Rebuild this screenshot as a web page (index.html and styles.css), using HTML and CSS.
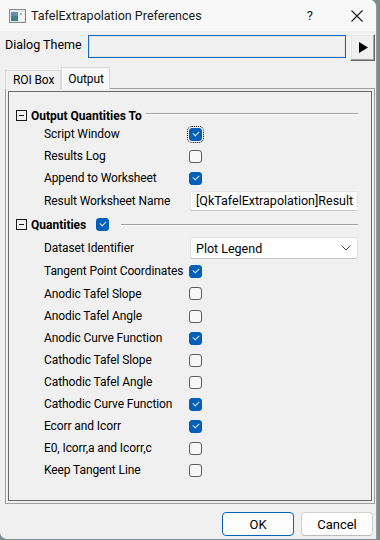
FILE: index.html
```html
<!DOCTYPE html>
<html>
<head>
<meta charset="utf-8">
<link rel="stylesheet" href="styles.css">
</head>
<body>
<div class="window">
  <div class="titlebar">
    <svg class="appicon" width="17" height="14" viewBox="0 0 17 14">
      <rect x="0.5" y="0.5" width="16" height="13" fill="#e8e8e8" stroke="#8a8a8a"/>
      <rect x="2" y="3" width="7" height="9" fill="#3f7f86"/>
      <rect x="2" y="3" width="7" height="4" fill="#5f8fb0"/>
      <rect x="10" y="3" width="5" height="9" fill="#f4f4f4"/>
      <rect x="11" y="4" width="2" height="2" fill="#8fc08f"/>
    </svg>
    <span class="title">TafelExtrapolation Preferences</span>
    <span class="help">?</span>
    <svg class="close" width="12" height="12" viewBox="0 0 12 12"><path d="M0.5 0.5 L11.5 11.5 M11.5 0.5 L0.5 11.5" stroke="#1a1a1a" stroke-width="1.1"/></svg>
  </div>
  <div class="content">
    <div class="theme-row">
      <span class="theme-label">Dialog Theme</span>
      <div class="theme-input"></div>
      <div class="theme-btn"><svg width="11" height="11" viewBox="0 0 11 11"><path d="M1 0 L10 5.5 L1 11 Z" fill="#000"/></svg></div>
    </div>
    <div class="tabs">
      <div class="tab">ROI Box</div>
      <div class="tab active">Output</div>
    </div>
    <div class="panel">
      <div class="inner">
        <div class="header h1">
          <span class="minus"></span>
          <span class="htext">Output Quantities To</span>
          <span class="hline"></span>
        </div>
        <div class="row"><span class="label">Script Window</span><span class="cb on focus"></span></div>
        <div class="row"><span class="label">Results Log</span><span class="cb"></span></div>
        <div class="row"><span class="label">Append to Worksheet</span><span class="cb on"></span></div>
        <div class="row tall"><span class="label">Result Worksheet Name</span><div class="textbox">[QkTafelExtrapolation]Result</div></div>
        <div class="header h2">
          <span class="minus"></span>
          <span class="htext">Quantities</span>
          <span class="cb on hcb"></span>
          <span class="hline"></span>
        </div>
        <div class="row tall2"><span class="label">Dataset Identifier</span><div class="combo"><span>Plot Legend</span><svg width="10" height="6" viewBox="0 0 10 6"><path d="M0.5 0.5 L5 5 L9.5 0.5" fill="none" stroke="#444" stroke-width="1"/></svg></div></div>
        <div class="row"><span class="label">Tangent Point Coordinates</span><span class="cb on"></span></div>
        <div class="row r23"><span class="label">Anodic Tafel Slope</span><span class="cb"></span></div>
        <div class="row"><span class="label">Anodic Tafel Angle</span><span class="cb"></span></div>
        <div class="row"><span class="label">Anodic Curve Function</span><span class="cb on"></span></div>
        <div class="row"><span class="label">Cathodic Tafel Slope</span><span class="cb"></span></div>
        <div class="row"><span class="label">Cathodic Tafel Angle</span><span class="cb"></span></div>
        <div class="row"><span class="label">Cathodic Curve Function</span><span class="cb on"></span></div>
        <div class="row"><span class="label">Ecorr and Icorr</span><span class="cb on"></span></div>
        <div class="row"><span class="label">E0, Icorr,a and Icorr,c</span><span class="cb"></span></div>
        <div class="row"><span class="label">Keep Tangent Line</span><span class="cb"></span></div>
      </div>
    </div>
    <div class="buttons">
      <div class="btn default">OK</div>
      <div class="btn">Cancel</div>
    </div>
  </div>
</div>
</body>
</html>
```
FILE: styles.css
```css
html, body {
  margin: 0;
  padding: 0;
}
body {
  width: 380px;
  height: 540px;
  background: #7d8a90;
  font-family: Roboto, "Noto Sans", sans-serif;
  font-size: 12px;
  color: #000;
  overflow: hidden;
}
.window {
  width: 376px;
  height: 539px;
  background: #f0f0f0;
  border-right: 1px solid #9a9a9a;
  border-radius: 0 7px 0 7px;
  overflow: hidden;
  display: flex;
  flex-direction: column;
}
.titlebar {
  height: 31px;
  background: #f8f8f8;
  display: flex;
  align-items: center;
  flex-shrink: 0;
}
.appicon {
  margin-left: 9px;
  margin-top: 1px;
}
.title {
  margin-left: 5px;
  font-size: 12.5px;
  color: #1a1a1a;
  flex: 1;
}
.help {
  font-size: 13px;
  color: #1a1a1a;
  margin-right: 38px;
}
.close {
  margin-right: 13px;
}
.content {
  flex: 1;
  display: flex;
  flex-direction: column;
  padding: 0 1px 0 5px;
}
.theme-row {
  display: flex;
  align-items: flex-start;
  margin-top: 3px;
  height: 27px;
}
.theme-label {
  width: 83px;
  line-height: 18px;
  margin-top: 2px;
  font-size: 12.5px;
}
.theme-input {
  width: 256px;
  height: 21px;
  margin-top: 1px;
  border: 1px solid #0f6cbd;
  background: #f0f0f0;
  box-shadow: inset 0 0 0 1px #e3e3e3;
}
.theme-btn {
  width: 23px;
  height: 25px;
  margin-left: 4px;
  background: #f0f0f0;
  border-top: 1px solid #fff;
  border-left: 1px solid #fff;
  border-right: 1px solid #696969;
  border-bottom: 1px solid #696969;
  box-shadow: inset -1px -1px 0 #a0a0a0, inset 1px 1px 0 #e3e3e3;
  display: flex;
  align-items: center;
  justify-content: center;
}
.theme-btn svg {
  margin-left: 2px;
}
.tabs {
  display: flex;
  align-items: flex-end;
  margin-top: 6px;
  height: 22px;
  position: relative;
  z-index: 1;
}
.tab {
  height: 19px;
  line-height: 18px;
  padding: 0 6px 0 7px;
  border: 1px solid #d9d9d9;
  border-bottom: none;
  background: #f0f0f0;
  box-sizing: border-box;
  letter-spacing: -0.1px;
}
.tab.active {
  height: 23px;
  line-height: 22px;
  padding: 0 5px 0 6px;
  background: #f9f9f9;
  border-color: #d9d9d9;
  margin-bottom: -1px;
  border-bottom: 1px solid #f0f0f0;
}
.panel {
  width: 370px;
  height: 416px;
  box-sizing: border-box;
  border: 1px solid #a0a0a0;
  padding: 2px;
  margin-top: -1px;
}
.inner {
  height: 100%;
  box-sizing: border-box;
  border: 1px solid #6a6a6a;
  padding-top: 16px;
}
.header {
  display: flex;
  align-items: center;
  height: 15px;
  padding-left: 7px;
}
.header.h2 {
  height: 23px;
}
.minus {
  border: 1px solid #1a1a1a;
  position: relative;
  box-sizing: border-box;
  width: 11px;
  height: 11px;
}
.minus::after {
  content: "";
  position: absolute;
  left: 2px;
  right: 2px;
  top: 4px;
  height: 1px;
  background: #1a1a1a;
}
.htext {
  font-weight: bold;
  margin-left: 4px;
  font-size: 12px;
}
.hline {
  flex: 1;
  height: 0;
  border-top: 1px solid #a0a0a0;
  border-bottom: 1px solid #fff;
  margin: 0 13px 0 4px;
}
.h1 .hline {
  margin-top: -3px;
}
.hcb {
  margin-left: 10px;
}
.h2 .hline {
  margin-left: 12px;
}
.row {
  display: flex;
  align-items: center;
  height: 22px;
}
.row.tall {
  height: 24px;
}
.row.tall2 {
  height: 24px;
}
.row.r23 {
  height: 23px;
}
.label {
  width: 145px;
  padding-left: 35px;
  white-space: nowrap;
  font-size: 12px;
  letter-spacing: -0.1px;
}
.cb {
  width: 13px;
  height: 13px;
  box-sizing: border-box;
  border: 1px solid #5e5e5e;
  border-radius: 3px;
  background: #f7f7f7;
  position: relative;
  flex-shrink: 0;
}
.cb.on {
  background: #005fb8;
  border-color: #005fb8;
}
.cb.on::after {
  content: "";
  position: absolute;
  left: 3px;
  top: 2px;
  width: 5px;
  height: 3px;
  border-left: 1px solid #dfe9f5;
  border-bottom: 1px solid #dfe9f5;
  transform: rotate(-45deg);
}
.cb.focus {
  outline: 1px dotted #000;
  outline-offset: 1px;
}
.textbox {
  width: 168px;
  height: 20px;
  box-sizing: border-box;
  background: #fff;
  border: 1px solid #e6e6e6;
  border-bottom-color: #c8c8c8;
  border-radius: 2px;
  margin-left: 1px;
  padding-left: 5px;
  line-height: 18px;
  font-size: 12.5px;
  white-space: nowrap;
  overflow: hidden;
}
.combo {
  width: 168px;
  height: 22px;
  box-sizing: border-box;
  background: #fff;
  border: 1px solid #e2e2e2;
  border-bottom-color: #c6c6c6;
  border-radius: 3px;
  margin-left: 1px;
  padding: 0 6px 0 5px;
  display: flex;
  align-items: center;
  justify-content: space-between;
  font-size: 12.5px;
}
.buttons {
  display: flex;
  justify-content: flex-end;
  margin-top: 8px;
  gap: 7px;
  padding-right: 2px;
}
.btn {
  width: 72px;
  height: 24px;
  box-sizing: border-box;
  border: 1px solid #d3d3d3;
  border-bottom-color: #bcbcbc;
  border-radius: 4px;
  background: #fdfdfd;
  display: flex;
  align-items: center;
  justify-content: center;
  font-size: 13px;
}
.btn.default {
  border: 1px solid #005fb8;
}
```
